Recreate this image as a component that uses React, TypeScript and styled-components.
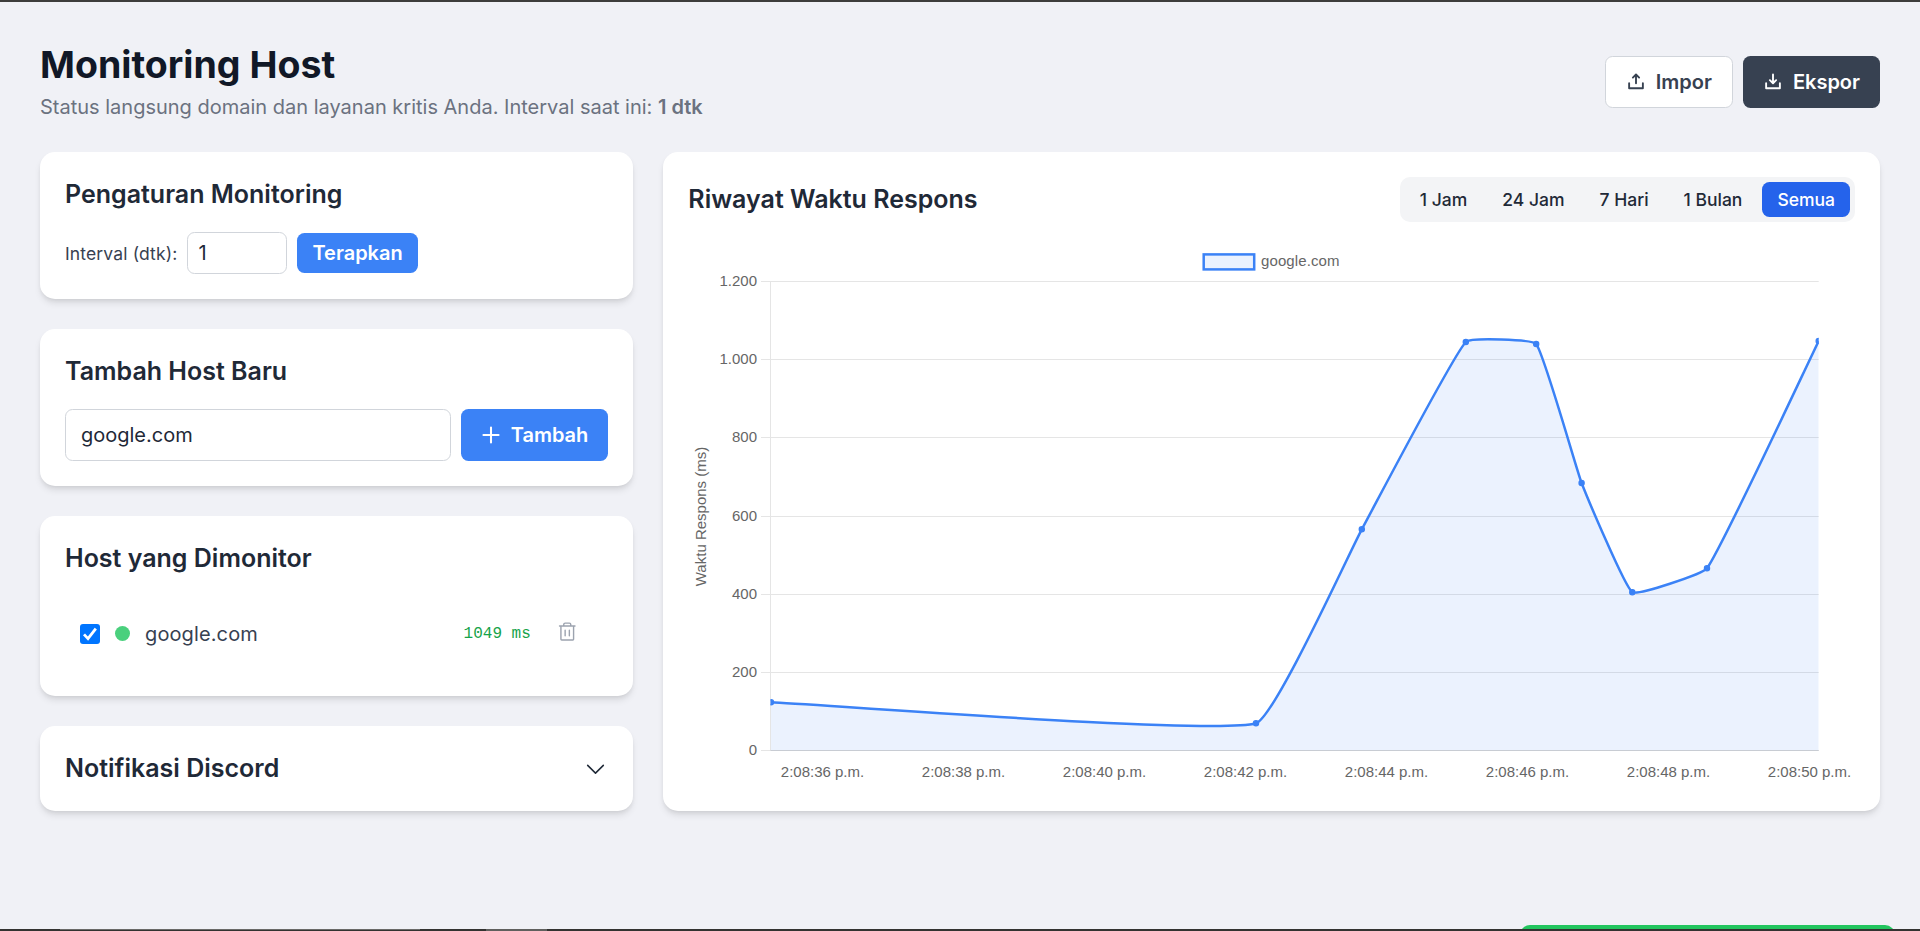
import React from "react";
import styled, { createGlobalStyle } from "styled-components";
import {
  PiUploadSimpleBold,
  PiDownloadSimpleBold,
  PiPlusBold,
  PiTrash,
  PiCaretDown,
} from "react-icons/pi";

const GlobalStyle = createGlobalStyle`
  *, *::before, *::after { box-sizing: border-box; }
  html, body { margin: 0; padding: 0; }
  body {
    background: #f0f1f6;
    color: #1f2937;
    font-family: Inter, sans-serif;
    font-size: 20px;
    line-height: 30px;
    overflow: hidden;
  }
  h1, h2, p { margin: 0; }
  button, input { font: inherit; color: inherit; margin: 0; }
`;

const Screen = styled.div`
  height: 931px;
  display: flex;
  flex-direction: column;
  overflow: hidden;
`;

const TopEdge = styled.div`
  flex: none;
  height: 2px;
  background: #3d3d3b;
`;

const Page = styled.main`
  position: relative;
  flex: 1;
  padding: 40px;
  overflow: hidden;
`;

const Header = styled.header`
  display: flex;
  justify-content: space-between;
  align-items: center;
  margin-bottom: 30px;
`;

const PageTitle = styled.h1`
  font-size: 37.5px;
  line-height: 45px;
  font-weight: 700;
  color: #111827;
`;

const Subtitle = styled.p`
  margin-top: 5px;
  color: #6b7280;
`;

const Strong = styled.span`
  font-weight: 600;
`;

const Row = styled.div`
  display: flex;
  align-items: center;
  gap: 10px;
`;

const Button = styled.button<{ $tone?: "primary" | "light" | "dark"; $compact?: boolean }>`
  display: flex;
  align-items: center;
  gap: 10px;
  height: ${(p) => (p.$compact ? 40 : 52)}px;
  padding: 0 ${(p) => (p.$compact ? 15 : 20)}px;
  border: ${(p) => (p.$tone === "light" ? "1px solid #d1d5db" : "0")};
  border-radius: 7.5px;
  font-weight: 600;
  white-space: nowrap;
  background: ${(p) =>
    p.$tone === "light" ? "#ffffff" : p.$tone === "dark" ? "#374151" : "#3b82f6"};
  color: ${(p) => (p.$tone === "light" ? "#374151" : "#ffffff")};
`;

const PlusIcon = styled(PiPlusBold)`
  width: 22px;
  height: 22px;
  margin: 0 -1px;
`;

const Columns = styled.div`
  display: grid;
  grid-template-columns: repeat(3, 1fr);
  gap: 30px;
`;

const Sidebar = styled.div`
  display: flex;
  flex-direction: column;
  gap: 30px;
`;

const Card = styled.section<{ $wide?: boolean }>`
  padding: 25px;
  border-radius: 15px;
  background: #ffffff;
  box-shadow: 0 5px 7.5px -1px rgba(0, 0, 0, 0.1), 0 2.5px 5px -2.5px rgba(0, 0, 0, 0.1);
  ${(p) => (p.$wide ? "grid-column: span 2; display: flex; flex-direction: column;" : "")}
`;

const CardTitle = styled.h2<{ $spaced?: boolean }>`
  font-size: 25px;
  line-height: 35px;
  font-weight: 600;
  margin-bottom: ${(p) => (p.$spaced ? 20 : 0)}px;
`;

const FieldLabel = styled.label`
  font-size: 17.5px;
  line-height: 25px;
  letter-spacing: 0.14px;
  color: #374151;
`;

const Input = styled.input<{ $small?: boolean }>`
  height: ${(p) => (p.$small ? 42 : 52)}px;
  ${(p) => (p.$small ? "width: 100px;" : "flex: 1; min-width: 0;")}
  padding: 0 ${(p) => (p.$small ? 10 : 15)}px;
  border: 1px solid #d1d5db;
  border-radius: 7.5px;
  background: #ffffff;
  outline: none;
`;

const HostRow = styled.div`
  display: flex;
  align-items: center;
  height: 75px;
  padding: 0 30px 0 15px;
  gap: 15px;
`;

const Check = styled.span`
  display: flex;
  width: 20px;
  height: 20px;
  border-radius: 3px;
  background: #0075ff;
`;

const Dot = styled.span`
  width: 15px;
  height: 15px;
  border-radius: 50%;
  background: #4ad07d;
`;

const HostName = styled.span`
  flex: 1;
  letter-spacing: 0.12px;
  color: #374151;
`;

const Latency = styled.span`
  padding-top: 2px;
  font-family: Consolas, "Liberation Mono", monospace;
  font-size: 16px;
  line-height: 25px;
  color: #16a34a;
`;

const TrashButton = styled.button`
  display: flex;
  margin-left: 10px;
  padding: 0 0 2px;
  border: 0;
  background: none;
  font-size: 22.5px;
  color: #9ca3af;
`;

const SplitRow = styled.div`
  display: flex;
  justify-content: space-between;
  align-items: center;
`;

const Tabs = styled.div`
  display: flex;
  gap: 5px;
  padding: 5px;
  border-radius: 10px;
  background: #f3f4f6;
`;

const Tab = styled.button<{ $active?: boolean }>`
  height: 35px;
  padding: 0 15px;
  border: 0;
  border-radius: 7.5px;
  font-size: 17.5px;
  line-height: 25px;
  font-weight: 500;
  background: ${(p) => (p.$active ? "#2563eb" : "transparent")};
  color: ${(p) => (p.$active ? "#ffffff" : "#1f2937")};
`;

const ChartFrame = styled.div`
  margin-top: 20px;
  height: 544px;
`;

const ChartSvg = styled.svg`
  display: block;
  font-family: "Liberation Sans", Arial, sans-serif;
  font-size: 15px;
  fill: #666666;
`;

const Toast = styled.div`
  position: absolute;
  right: 25px;
  bottom: -60px;
  width: 375px;
  height: 64px;
  border-radius: 10px;
  background: #22c55e;
`;

const Taskbar = styled.div`
  flex: none;
  display: flex;
  height: 2px;
  background: #333331;
`;

const TaskSegment = styled.span<{ $width: number; $kind?: "outlined" | "lit" }>`
  width: ${(p) => p.$width}px;
  height: 2px;
  border-top: ${(p) => (p.$kind === "outlined" ? "1px solid #6a6a68" : "0")};
  background: ${(p) => (p.$kind === "lit" ? "#60605e" : "transparent")};
`;

type Point = { x: number; y: number };

const LEFT = 770.5;
const RIGHT = 1818.7;
const TOP = 281.5;
const BOTTOM = 750.5;

const points: Point[] = [
  { x: 771, y: 702.3 },
  { x: 1256, y: 723.3 },
  { x: 1361.8, y: 529.3 },
  { x: 1465.8, y: 342 },
  { x: 1536.2, y: 344 },
  { x: 1581.6, y: 483 },
  { x: 1632.3, y: 592.2 },
  { x: 1707, y: 568.3 },
  { x: 1818.7, y: 341 },
];

const yTicks = [
  { label: "1.200", y: 281.5 },
  { label: "1.000", y: 359.5 },
  { label: "800", y: 437.5 },
  { label: "600", y: 516.5 },
  { label: "400", y: 594.5 },
  { label: "200", y: 672.5 },
  { label: "0", y: 750.5 },
];

const xTicks = [36, 38, 40, 42, 44, 46, 48, 50];

function smoothPath(pts: Point[], tension: number): string {
  const dist = (a: Point, b: Point) => Math.hypot(b.x - a.x, b.y - a.y);
  const controls = pts.map((p, i) => {
    const prev = pts[i - 1] ?? p;
    const next = pts[i + 1] ?? p;
    const d0 = dist(prev, p);
    const d1 = dist(p, next);
    const before = (tension * d0) / (d0 + d1);
    const after = (tension * d1) / (d0 + d1);
    return {
      in: { x: p.x - before * (next.x - prev.x), y: p.y - before * (next.y - prev.y) },
      out: { x: p.x + after * (next.x - prev.x), y: p.y + after * (next.y - prev.y) },
    };
  });
  return pts
    .map((p, i) => {
      if (i === 0) return `M${p.x} ${p.y}`;
      const a = controls[i - 1].out;
      const b = controls[i].in;
      return `C${a.x} ${a.y} ${b.x} ${b.y} ${p.x} ${p.y}`;
    })
    .join(" ");
}

function ResponseChart() {
  const line = smoothPath(points, 0.1);
  return (
    <ChartSvg width="1167" height="544" viewBox="688 242 1167 544">
      <defs>
        <clipPath id="plot">
          <rect x={LEFT} y={TOP} width={RIGHT - LEFT} height={BOTTOM - TOP} />
        </clipPath>
      </defs>
      <rect x="1203.7" y="254.4" width="50.5" height="15" fill="#ebf2fe" stroke="#3b82f6" strokeWidth="2.5" />
      <text x="1261" y="266" textLength="78.5">google.com</text>
      {yTicks.map((t) => (
        <g key={t.label}>
          <line x1="761" x2={RIGHT} y1={t.y} y2={t.y} stroke="#e5e5e5" />
          <text x="757" y={t.y + 4.5} textAnchor="end">{t.label}</text>
        </g>
      ))}
      <line x1={LEFT} x2={LEFT} y1={TOP} y2={BOTTOM} stroke="#e5e5e5" />
      <g clipPath="url(#plot)">
        <path d={`${line} L${RIGHT} ${BOTTOM} L771 ${BOTTOM} Z`} fill="rgba(59,130,246,0.1)" />
        <path d={line} fill="none" stroke="#3b82f6" strokeWidth="2.5" />
        {points.map((p) => (
          <circle key={p.x} cx={p.x} cy={p.y} r="2.6" fill="#3b82f6" stroke="#3b82f6" strokeWidth="1.25" />
        ))}
      </g>
      <line x1={LEFT} x2={RIGHT} y1={BOTTOM} y2={BOTTOM} stroke="#c8ccd3" />
      {xTicks.map((s, i) => (
        <text key={s} x={822.5 + i * 141} y="777" textAnchor="middle">{`2:08:${s} p.m.`}</text>
      ))}
      <text transform="translate(705.7 516.5) rotate(-90)" textAnchor="middle">Waktu Respons (ms)</text>
    </ChartSvg>
  );
}

const ranges = ["1 Jam", "24 Jam", "7 Hari", "1 Bulan", "Semua"];

export default function App() {
  return (
    <Screen>
      <GlobalStyle />
      <TopEdge />
      <Page>
        <Header>
          <div>
            <PageTitle>Monitoring Host</PageTitle>
            <Subtitle>
              Status langsung domain dan layanan kritis Anda. Interval saat ini: <Strong>1 dtk</Strong>
            </Subtitle>
          </div>
          <Row>
            <Button $tone="light">
              <PiUploadSimpleBold />
              Impor
            </Button>
            <Button $tone="dark">
              <PiDownloadSimpleBold />
              Ekspor
            </Button>
          </Row>
        </Header>
        <Columns>
          <Sidebar>
            <Card>
              <CardTitle $spaced>Pengaturan Monitoring</CardTitle>
              <Row>
                <FieldLabel>Interval (dtk):</FieldLabel>
                <Input $small defaultValue="1" />
                <Button $compact>Terapkan</Button>
              </Row>
            </Card>
            <Card>
              <CardTitle $spaced>Tambah Host Baru</CardTitle>
              <Row>
                <Input defaultValue="google.com" />
                <Button>
                  <PlusIcon />
                  Tambah
                </Button>
              </Row>
            </Card>
            <Card>
              <CardTitle $spaced>Host yang Dimonitor</CardTitle>
              <HostRow>
                <Check>
                  <svg width="20" height="20" viewBox="0 0 20 20">
                    <path d="M4 10.4 L8 14.6 L15.8 4.6" fill="none" stroke="#ffffff" strokeWidth="2.8" />
                  </svg>
                </Check>
                <Dot />
                <HostName>google.com</HostName>
                <Latency>1049 ms</Latency>
                <TrashButton>
                  <PiTrash />
                </TrashButton>
              </HostRow>
            </Card>
            <Card>
              <SplitRow>
                <CardTitle>Notifikasi Discord</CardTitle>
                <PiCaretDown size={25} />
              </SplitRow>
            </Card>
          </Sidebar>
          <Card $wide>
            <SplitRow>
              <CardTitle>Riwayat Waktu Respons</CardTitle>
              <Tabs>
                {ranges.map((r) => (
                  <Tab key={r} $active={r === "Semua"}>
                    {r}
                  </Tab>
                ))}
              </Tabs>
            </SplitRow>
            <ChartFrame>
              <ResponseChart />
            </ChartFrame>
          </Card>
        </Columns>
        <Toast />
      </Page>
      <Taskbar>
        <TaskSegment $width={60} />
        <TaskSegment $width={360} $kind="outlined" />
        <TaskSegment $width={66} />
        <TaskSegment $width={61} $kind="lit" />
      </Taskbar>
    </Screen>
  );
}
